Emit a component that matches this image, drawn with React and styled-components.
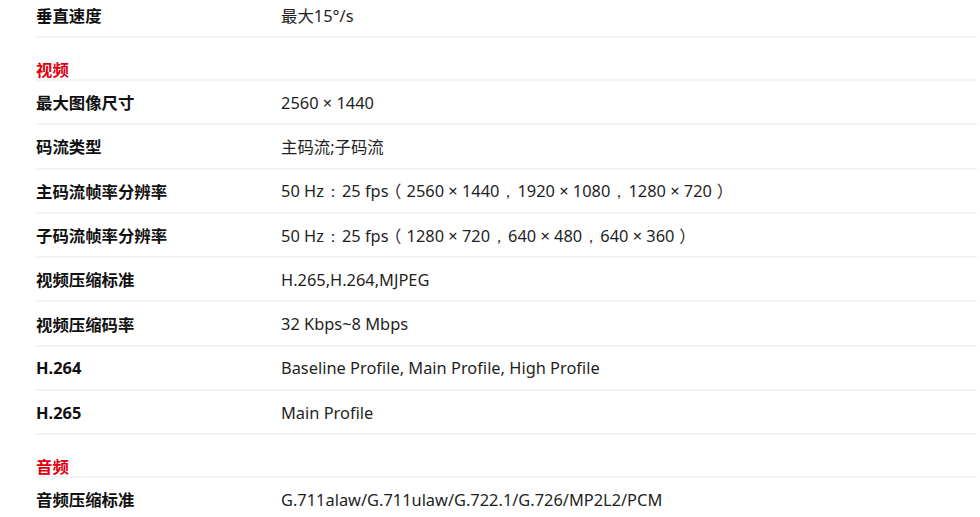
import React from 'react'
import styled, { createGlobalStyle } from 'styled-components'

const GlobalStyle = createGlobalStyle`
    html, body {
        margin: 0;
        padding: 0;
        background: #ffffff;
    }
    body {
        font-family: "Noto Sans", "Noto Sans CJK SC", sans-serif;
        overflow: hidden;
    }
`

const sections = [
    {
        rows: [['垂直速度', '最大15°/s']],
    },
    {
        title: '视频',
        rows: [
            ['最大图像尺寸', '2560 × 1440'],
            ['码流类型', '主码流;子码流'],
            ['主码流帧率分辨率', '50 Hz：25 fps（2560 × 1440，1920 × 1080，1280 × 720）'],
            ['子码流帧率分辨率', '50 Hz：25 fps（1280 × 720，640 × 480，640 × 360）'],
            ['视频压缩标准', 'H.265,H.264,MJPEG'],
            ['视频压缩码率', '32 Kbps~8 Mbps'],
            ['H.264', 'Baseline Profile, Main Profile, High Profile'],
            ['H.265', 'Main Profile'],
        ],
    },
    {
        title: '音频',
        rows: [['音频压缩标准', 'G.711alaw/G.711ulaw/G.722.1/G.726/MP2L2/PCM']],
    },
]

// full-width punctuation sits centred in its box, as in the original page
const FULL_WIDTH = /([：，（）])/

function renderValue(value) {
    return value.split(FULL_WIDTH).map((part, i) => {
        if (part === '（') return <Punct key={i} $indent="-0.22em">{part}</Punct>
        if (part === '）') return <Punct key={i} $indent="0.3em">{part}</Punct>
        if (part === '：' || part === '，') return <Punct key={i} $latin>{part}</Punct>
        return part
    })
}

function App() {
    return (
        <>
            <GlobalStyle />
            <Page>
                <Table>
                    {sections.map((section, i) => (
                        <React.Fragment key={i}>
                            {section.title && <GroupTitle>{section.title}</GroupTitle>}
                            {section.rows.map(([label, value]) => (
                                <Row key={label}>
                                    <Label>{label}</Label>
                                    <Value>{renderValue(value)}</Value>
                                </Row>
                            ))}
                        </React.Fragment>
                    ))}
                </Table>
            </Page>
        </>
    )
}

const Page = styled.div`
    width: 980px;
    height: 517px;
    overflow: hidden;
    padding: 0 3px 0 36px;
    box-sizing: border-box;
`

const Table = styled.div`
    display: flex;
    flex-direction: column;
    margin-top: -6px;
`

const Row = styled.div`
    display: grid;
    grid-template-columns: 245px 1fr;
    align-items: center;
    height: 42.3px;
    border-bottom: 2px solid #f3f3f3;
`

const GroupTitle = styled.div`
    padding-top: 21.7px;
    height: 19px;
    line-height: 19px;
    font-size: 16.4px;
    font-weight: 700;
    color: #e0000f;
    border-bottom: 2px solid #f3f3f3;
`

const Label = styled.div`
    font-size: 16.4px;
    font-weight: 700;
    color: #111111;
    white-space: nowrap;
`

const Value = styled.div`
    font-size: 16.4px;
    color: #1f1f1f;
    white-space: nowrap;
`

const Punct = styled.span`
    display: inline-block;
    width: 1.1em;
    text-align: ${({ $latin }) => ($latin ? 'center' : 'left')};
    text-indent: ${({ $indent }) => $indent || '0'};
    font-family: ${({ $latin }) => ($latin ? '"Noto Sans", sans-serif' : 'inherit')};
`

export default App
